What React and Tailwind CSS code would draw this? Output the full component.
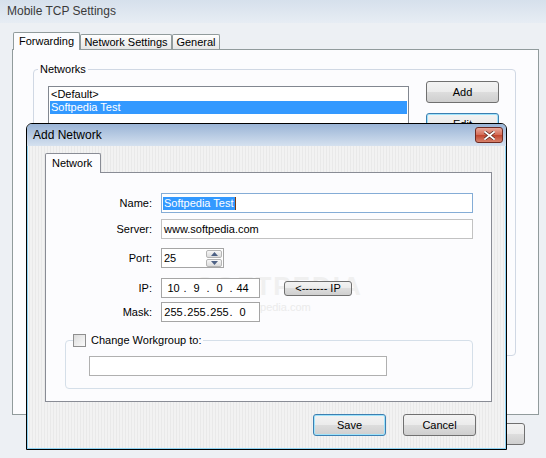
import React from "react";

const btn =
  "flex items-center justify-center rounded-[3px] bg-[linear-gradient(#f3f3f3,#ebebeb_50%,#dddddd_50%,#cfcfcf)] text-[11px] text-black";

function Button({ children, className = "", focused = false }) {
  return (
    <div
      className={`${btn} ${
        focused
          ? "border border-[#3c7fb1] shadow-[inset_0_0_0_1px_#9fe3fb]"
          : "border border-[#707070]"
      } ${className}`}
    >
      {children}
    </div>
  );
}

function Field({ label, top, children }) {
  return (
    <div className={`flex items-center h-[20px] ${top}`}>
      <div className="w-[107px] text-right pr-px">{label}</div>
      <div className="ml-[8px] flex items-center">{children}</div>
    </div>
  );
}

function IpBox({ parts }) {
  return (
    <div className="flex items-center w-[99px] h-[20px] border border-[#a5a5a5] bg-white pl-px">
      {parts.map((p, i) => (
        <React.Fragment key={i}>
          {i > 0 && <span className="w-[2px] flex justify-center">.</span>}
          <span className="w-[21px] text-center">{p}</span>
        </React.Fragment>
      ))}
    </div>
  );
}

function Arrow({ up }) {
  return (
    <svg width="7" height="4" viewBox="0 0 7 4">
      <path d={up ? "M0 4 L3.5 0 L7 4 Z" : "M0 0 L3.5 4 L7 0 Z"} fill="#4d6185" />
    </svg>
  );
}

export default function App() {
  return (
    <div className="relative w-[546px] h-[458px] overflow-hidden bg-[#edf0f4] font-['Liberation_Sans',Arial,sans-serif] text-[11px] leading-[13px] text-black">
      {/* main window title */}
      <div className="h-[23px] flex items-center pl-[7px] bg-gradient-to-b from-[#d6e0ec] to-[#e7edf4] text-[12px] text-[#3a3a3a]">
        Mobile TCP Settings
      </div>

      <div className="pl-[12px] pt-[9px]">
        {/* tabs */}
        <div className="flex items-end h-[17px] pl-px">
          <div className="relative z-10 -mb-px h-[18px] w-[67px] flex items-center pl-[5px] bg-[#fcfcfe] border border-b-0 border-[#919b9c] rounded-t-[2px]">
            Forwarding
          </div>
          <div className="h-[15px] w-[92px] flex items-center justify-center bg-gradient-to-b from-[#ffffff] to-[#e6e6e6] border border-b-0 border-[#919b9c] rounded-t-[2px]">
            Network Settings
          </div>
          <div className="h-[15px] w-[48px] flex items-center justify-center bg-gradient-to-b from-[#ffffff] to-[#e6e6e6] border border-b-0 border-[#919b9c] rounded-t-[2px]">
            General
          </div>
        </div>

        {/* tab panel */}
        <div className="w-[527px] h-[366px] border border-[#919b9c] bg-[#fcfcfe] pl-[20px] pt-[13px]">
          <fieldset className="w-[483px] h-[293px] border border-[#d0d8e4] rounded-[4px]">
            <legend className="ml-[4px] px-[2px]">Networks</legend>
            <div className="flex pl-[14px]">
              <div className="mt-[10px] w-[361px] h-[150px] border border-[#828790] bg-white p-px">
                <div className="h-[13px] pl-px">&lt;Default&gt;</div>
                <div className="h-[13px] pl-px bg-[#3399ff] text-white">Softpedia Test</div>
              </div>
              <div className="ml-[17px] mt-[5px] flex flex-col gap-[10px]">
                <Button className="w-[73px] h-[22px]">Add</Button>
                <Button className="w-[73px] h-[22px]" focused>
                  Edit
                </Button>
                <Button className="w-[73px] h-[22px]">Remove</Button>
              </div>
            </div>
          </fieldset>
        </div>

        <div className="flex justify-end w-[527px] pr-[14px] mt-[8px]">
          <Button className="w-[73px] h-[22px]">Close</Button>
        </div>
      </div>

      {/* Add Network dialog */}
      <div className="absolute left-[26px] top-[123px] w-[481px] h-[327px] border border-black rounded-t-[6px] overflow-hidden shadow-[inset_0_0_0_1px_#8fd3f3] bg-[repeating-linear-gradient(90deg,#f2f2f2_0px,#f2f2f2_2px,#e9e9e9_2px,#e9e9e9_3px)]">
        <div className="h-[22px] flex items-center justify-between pl-[6px] pr-[3px] bg-gradient-to-b from-[#9ab4d6] to-[#d5e1ef] text-[12px]">
          <span>Add Network</span>
          <div className="w-[28px] h-[16px] rounded-[3px] border border-[#6d2a21] bg-[linear-gradient(#e9a99c,#d46a55_50%,#c0432c_50%,#d7826c)] flex items-center justify-center">
            <svg width="11" height="9" viewBox="0 0 11 9">
              <path
                d="M1 1 L10 8 M10 1 L1 8"
                stroke="#5a2a22"
                strokeWidth="3.2"
                strokeLinecap="square"
              />
              <path
                d="M1 1 L10 8 M10 1 L1 8"
                stroke="#ffffff"
                strokeWidth="1.8"
                strokeLinecap="square"
              />
            </svg>
          </div>
        </div>

        <div className="pl-[18px] pt-[7px]">
          <div className="relative z-10 -mb-px ml-0 w-[56px] h-[20px] flex items-center pl-[6px] bg-[#fcfcfe] border border-b-0 border-[#898c95] rounded-t-[2px]">
            Network
          </div>
          <div className="relative w-[447px] h-[230px] border border-[#898c95] bg-[#fcfcfe] pt-[20px]">
            {/* watermark */}
            <div className="absolute left-[150px] top-[100px] text-[26px] font-bold leading-[26px] tracking-[2px] text-[#f0f0f0]">
              SOFTPEDIA
            </div>
            <div className="absolute left-[170px] top-[128px] text-[11px] text-[#ebebeb]">
              www.softpedia.com
            </div>

            <div className="relative">
              <Field label="Name:" top="">
                <div className="w-[312px] h-[20px] border border-[#84acd6] bg-white flex items-center pl-px">
                  <span className="bg-[#3399ff] text-white px-px">Softpedia Test</span>
                  <span className="w-px h-[13px] bg-[#7a3b10]" />
                </div>
              </Field>
              <Field label="Server:" top="mt-[6px]">
                <div className="w-[312px] h-[20px] border border-[#c2c2c2] bg-white flex items-center pl-[2px]">
                  www.softpedia.com
                </div>
              </Field>
              <Field label="Port:" top="mt-[9px]">
                <div className="w-[63px] h-[20px] border border-[#a5a5a5] bg-white flex items-center justify-between pl-[2px] pr-px">
                  <span>25</span>
                  <div className="flex flex-col gap-px">
                    <div className="w-[16px] h-[8px] border border-[#b5b5b5] rounded-[2px] bg-gradient-to-b from-[#f7f7f7] to-[#dcdcdc] flex items-center justify-center">
                      <Arrow up />
                    </div>
                    <div className="w-[16px] h-[8px] border border-[#b5b5b5] rounded-[2px] bg-gradient-to-b from-[#f7f7f7] to-[#dcdcdc] flex items-center justify-center">
                      <Arrow />
                    </div>
                  </div>
                </div>
              </Field>
              <Field label="IP:" top="mt-[10px]">
                <IpBox parts={["10", "9", "0", "44"]} />
                <Button className="ml-[24px] w-[68px] h-[15px] text-[11px]">&lt;------- IP</Button>
              </Field>
              <Field label="Mask:" top="mt-[4px]">
                <IpBox parts={["255", "255", "255", "0"]} />
              </Field>

              <fieldset className="ml-[19px] mt-[12px] w-[408px] h-[55px] border border-[#d5dfe9] rounded-[4px]">
                <legend className="ml-[7px] pr-[2px] flex items-center">
                  <span className="w-[13px] h-[13px] border border-[#8f8f8f] bg-gradient-to-br from-[#dcdcdc] to-[#fbfbfb]" />
                  <span className="ml-[5px]">Change Workgroup to:</span>
                </legend>
                <div className="ml-[23px] mt-[9px] w-[298px] h-[20px] border border-[#b0b0b0] bg-white" />
              </fieldset>
            </div>
          </div>

          <div className="flex justify-end gap-[17px] pr-[30px] mt-[12px]">
            <Button className="w-[73px] h-[22px]" focused>
              Save
            </Button>
            <Button className="w-[73px] h-[22px]">Cancel</Button>
          </div>
        </div>
      </div>
    </div>
  );
}
